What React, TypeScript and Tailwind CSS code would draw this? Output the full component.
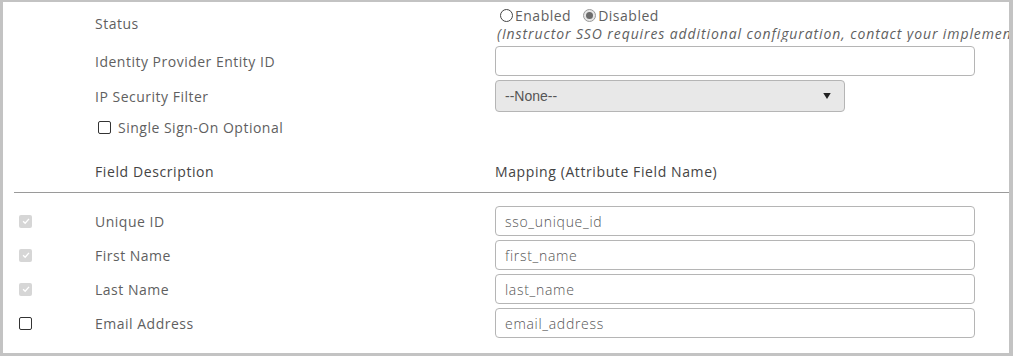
import React from 'react'

const font = { fontFamily: '"Open Sans", "Liberation Sans", sans-serif' }

const mappings = [
  { label: 'Unique ID', value: 'sso_unique_id', locked: true },
  { label: 'First Name', value: 'first_name', locked: true },
  { label: 'Last Name', value: 'last_name', locked: true },
  { label: 'Email Address', value: 'email_address', locked: false },
]

function LockedCheck() {
  return (
    <span className="flex h-[13px] w-[13px] items-center justify-center rounded-[2px] bg-[#d6d6d6]">
      <svg viewBox="0 0 12 12" className="h-[10px] w-[10px]">
        <path d="M2.5 6.2 5 8.6 9.6 3.4" fill="none" stroke="#fff" strokeWidth="1.6" />
      </svg>
    </span>
  )
}

function Box() {
  return <span className="block h-[13px] w-[13px] rounded-[2px] border border-[#333] bg-white" />
}

function Radio({ checked }: { checked?: boolean }) {
  return (
    <span
      className={
        'flex h-[13px] w-[13px] items-center justify-center rounded-full border ' +
        (checked ? 'border-[#9a9a9a] bg-[#e6e6e6]' : 'border-[#444] bg-white')
      }
    >
      {checked && <span className="h-[7px] w-[7px] rounded-full bg-[#6b6b6b]" />}
    </span>
  )
}

export default function App() {
  return (
    <div
      className="h-[356px] w-[1013px] overflow-hidden border-t-2 border-r-4 border-b-[3px] border-l-[3px] border-[#c3c3c3] bg-white text-[14px] tracking-[0.5px] text-[#5f5f5f]"
      style={font}
    >
      <div className="grid grid-cols-[92px_400px_1fr]">
        {/* status */}
        <div />
        <div className="pt-[12px] leading-[20px]">Status</div>
        <div className="pt-[4px] whitespace-nowrap">
          <div className="flex h-[19px] items-center gap-[2px] pl-[5px]">
            <Radio />
            <span className="mr-[10px]">Enabled</span>
            <Radio checked />
            <span>Disabled</span>
          </div>
          <div className="h-[17px] overflow-hidden pl-[2px] leading-[17px] tracking-[0.9px] italic">
            (Instructor SSO requires additional configuration, contact your implementation consultant)
          </div>
        </div>

        {/* entity id */}
        <div />
        <div className="flex items-center pt-[4px]">Identity Provider Entity ID</div>
        <div className="pt-[4px]">
          <div className="h-[30px] w-[480px] rounded-[4px] border border-[#b5b5b5]" />
        </div>

        {/* ip filter */}
        <div />
        <div className="flex items-center pt-[4px]">IP Security Filter</div>
        <div className="pt-[4px]">
          <div
            className="flex h-[32px] w-[350px] items-center justify-between rounded-[4px] border border-[#b5b5b5] bg-[#e8e8e8] pr-[13px] pl-[9px] tracking-normal text-[#555]"
            style={{ fontFamily: '"Liberation Sans", Arial, sans-serif' }}
          >
            <span>--None--</span>
            <svg viewBox="0 0 10 8" className="h-[6px] w-[8px]">
              <path d="M0 0h10L5 8z" fill="#222" />
            </svg>
          </div>
        </div>

        {/* sso optional */}
        <div />
        <div className="flex h-[26px] items-center gap-[7px] pl-[3px] pt-[4px]">
          <Box />
          <span>Single Sign-On Optional</span>
        </div>
        <div />
      </div>

      <div className="mt-[23px] ml-[11px] grid grid-cols-[81px_400px_1fr] border-b border-[#9a9a9a] pb-[10px] font-medium tracking-[0.6px] text-[#444]">
        <div />
        <div>Field Description</div>
        <div>Mapping (Attribute Field Name)</div>
      </div>

      <div className="mt-[13px] flex flex-col gap-[4px]">
        {mappings.map((m) => (
          <div key={m.label} className="grid h-[30px] grid-cols-[92px_400px_1fr] items-center">
            <div className="pl-[16px]">{m.locked ? <LockedCheck /> : <Box />}</div>
            <div>{m.label}</div>
            <div className="flex h-[30px] w-[480px] items-center rounded-[4px] border border-[#b5b5b5] px-[9px] font-light tracking-[0.7px] text-[#555]">
              {m.value}
            </div>
          </div>
        ))}
      </div>
    </div>
  )
}
